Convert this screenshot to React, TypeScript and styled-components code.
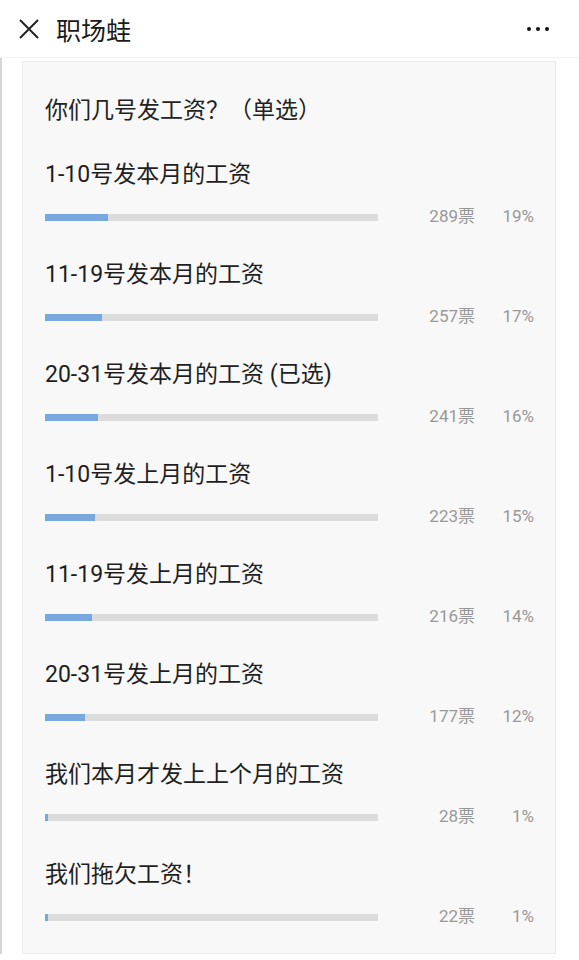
import React, { FC } from "react";
import styled, { createGlobalStyle } from "styled-components";

interface PollOption {
  label: string;
  votes: number;
  percent: number;
}

const options: PollOption[] = [
  { label: "1-10号发本月的工资", votes: 289, percent: 19 },
  { label: "11-19号发本月的工资", votes: 257, percent: 17 },
  { label: "20-31号发本月的工资 (已选)", votes: 241, percent: 16 },
  { label: "1-10号发上月的工资", votes: 223, percent: 15 },
  { label: "11-19号发上月的工资", votes: 216, percent: 14 },
  { label: "20-31号发上月的工资", votes: 177, percent: 12 },
  { label: "我们本月才发上上个月的工资", votes: 28, percent: 1 },
  { label: "我们拖欠工资！", votes: 22, percent: 1 },
];

const GlobalStyle = createGlobalStyle`
  body {
    margin: 0;
    background: #fff;
    font-family: Roboto, "Noto Sans CJK SC", sans-serif;
    color: #222;
  }
`;

const CloseIcon: FC = () => (
  <svg width="22" height="22" viewBox="0 0 22 22">
    <path d="M2 2 L20 20 M20 2 L2 20" stroke="#222" strokeWidth="2" fill="none" />
  </svg>
);

const App: FC = () => (
  <Root>
    <GlobalStyle />
    <Header>
      <CloseButton>
        <CloseIcon />
      </CloseButton>
      <HeaderTitle>职场蛙</HeaderTitle>
      <MoreButton>
        <Dot />
        <Dot />
        <Dot />
      </MoreButton>
    </Header>
    <Body>
      <Card>
        <Question>你们几号发工资？（单选）</Question>
        {options.map((o, i) => (
          <Option key={o.label} last={i === options.length - 1}>
            <OptionLabel>{o.label}</OptionLabel>
            <ResultRow>
              <Track>
                <Fill style={{ width: `${Math.max(o.percent, 1)}%` }} />
              </Track>
              <Votes>{o.votes}票</Votes>
              <Percent>{o.percent}%</Percent>
            </ResultRow>
          </Option>
        ))}
      </Card>
    </Body>
  </Root>
);

export default App;

const Root = styled.div`
  width: 579px;
  height: 960px;
  overflow: hidden;
`;
const Header = styled.div`
  height: 57px;
  display: flex;
  align-items: center;
  padding: 0 0 0 18px;
  border-bottom: 1px solid #f2f2f2;
  background: #fff;
`;
const CloseButton = styled.div`
  width: 22px;
  height: 22px;
  display: flex;
`;
const HeaderTitle = styled.div`
  margin-left: 16px;
  font-size: 25px;
  color: #1a1a1a;
  flex: 1;
`;
const MoreButton = styled.div`
  display: flex;
  gap: 5px;
  margin-right: 30px;
`;
const Dot = styled.span`
  width: 4px;
  height: 4px;
  border-radius: 50%;
  background: #111;
`;
const Body = styled.div`
  display: flex;
  border-left: 2px solid #d6d6d6;
  padding: 3px 0 0 20px;
`;
const Card = styled.div`
  width: 534px;
  background: #f8f8f8;
  border: 1px solid #ececec;
  padding: 0 21px 0 22px;
  box-sizing: border-box;
  height: 893px;
`;
const Question = styled.div`
  padding-top: 34px;
  font-size: 23px;
  line-height: 30px;
  margin-bottom: 34px;
`;
const Option = styled.div<{ last?: boolean }>`
  padding-bottom: ${({ last }) => (last ? "27px" : "33px")};
`;
const OptionLabel = styled.div`
  font-size: 23px;
  line-height: 30px;
  color: #1e1e1e;
`;
const ResultRow = styled.div`
  display: flex;
  align-items: center;
  height: 20px;
  line-height: 20px;
  margin-top: 17px;
`;
const Track = styled.div`
  width: 333px;
  height: 7px;
  background: #dcdcdc;
`;
const Fill = styled.div`
  height: 100%;
  background: #78a8de;
`;
const Votes = styled.div`
  width: 97px;
  text-align: right;
  font-size: 17px;
  color: #999;
  margin-top: -3px;
`;
const Percent = styled.div`
  width: 59px;
  text-align: right;
  font-size: 17px;
  color: #999;
  margin-top: -3px;
`;
